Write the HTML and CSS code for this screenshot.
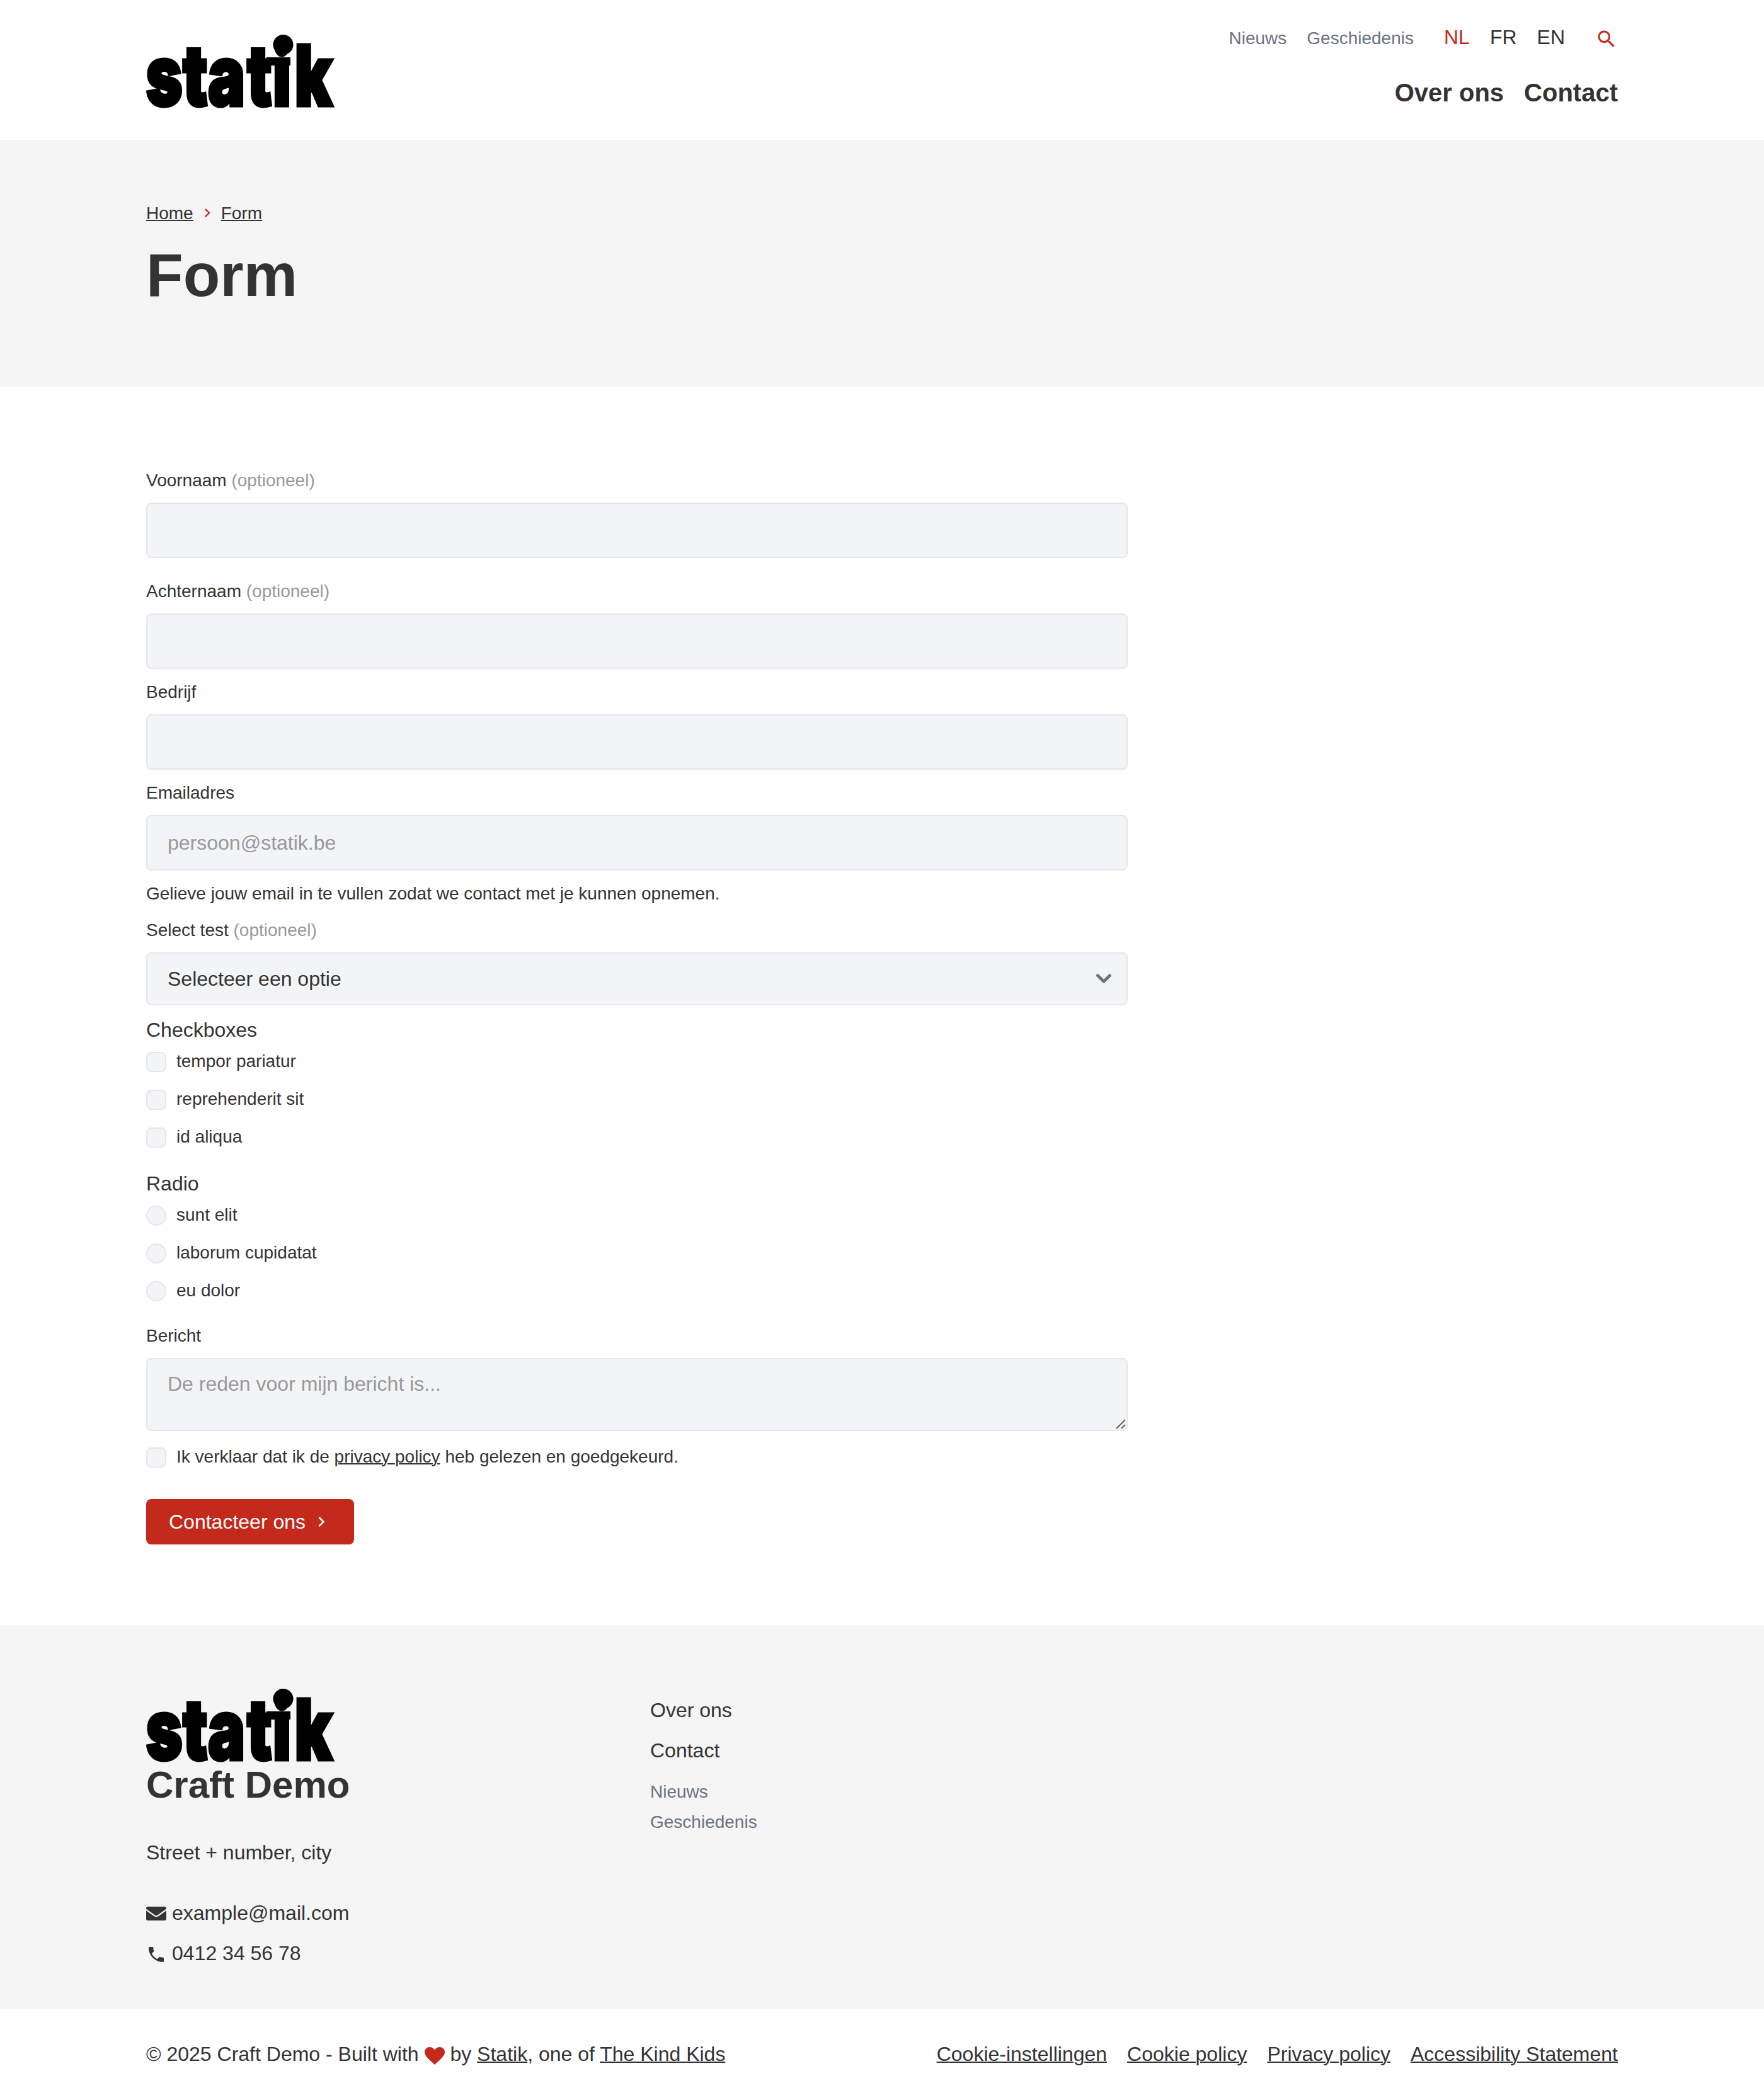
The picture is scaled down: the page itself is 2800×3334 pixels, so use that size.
FILE: index.html
```html
<!DOCTYPE html>
<html lang="nl">
<head>
<meta charset="utf-8">
<title>Form</title>
<link rel="stylesheet" href="styles.css">
</head>
<body>
<svg class="defs" width="0" height="0" aria-hidden="true">
  <symbol id="chevron" viewBox="0 0 24 24"><path d="M8.59 16.59 13.17 12 8.59 7.41 10 6l6 6-6 6z"/></symbol>
</svg>

<header class="header container">
  <a class="logo" href="#">
    <svg class="logo-mark" viewBox="0 0 300 118" role="img" aria-label="statik">
      <text class="logo-text" transform="scale(.74 1)" y="114" x="-2 77 131 215 270 317">statik</text>
      <circle cx="216.500" cy="17" r="16"/>
      <rect x="190" y="37" width="38" height="13"/>
    </svg>
  </a>
  <div class="header-nav">
    <div class="meta-row">
      <nav class="meta-nav"><a href="#">Nieuws</a><a href="#">Geschiedenis</a></nav>
      <nav class="lang-nav"><a class="is-active" href="#">NL</a><a href="#">FR</a><a href="#">EN</a></nav>
      <svg class="search" viewBox="0 0 24 24"><path d="M15.5 14h-.79l-.28-.27A6.471 6.471 0 0 0 16 9.500 6.500 6.500 0 1 0 9.500 16c1.610 0 3.090-.590 4.230-1.570l.270.280v.790l5 4.990L20.490 19l-4.990-5zm-6 0C7.010 14 5 11.990 5 9.500S7.010 5 9.500 5 14 7.010 14 9.500 11.990 14 9.500 14z"/></svg>
    </div>
    <nav class="main-nav"><a href="#">Over ons</a><a href="#">Contact</a></nav>
  </div>
</header>

<section class="hero">
  <div class="container">
    <nav class="breadcrumb"><a href="#">Home</a><svg><use href="#chevron"/></svg><a href="#">Form</a></nav>
    <h1>Form</h1>
  </div>
</section>

<main class="container">
  <form class="form">
    <div class="field field-spaced"><label for="f1">Voornaam <span class="optional">(optioneel)</span></label><input id="f1" class="control" type="text"></div>
    <div class="field"><label for="f2">Achternaam <span class="optional">(optioneel)</span></label><input id="f2" class="control" type="text"></div>
    <div class="field"><label for="f3">Bedrijf</label><input id="f3" class="control" type="text"></div>
    <div class="field"><label for="f4">Emailadres</label><input id="f4" class="control" type="email" placeholder="persoon@statik.be"></div>
    <p class="hint">Gelieve jouw email in te vullen zodat we contact met je kunnen opnemen.</p>
    <div class="field">
      <label for="f5">Select test <span class="optional">(optioneel)</span></label>
      <div class="control-wrap">
        <select id="f5" class="control select"><option>Selecteer een optie</option></select>
        <svg class="select-arrow" viewBox="0 0 24 16"><path d="M2.400 2.800 12 12.200 21.600 2.800"/></svg>
      </div>
    </div>
    <fieldset class="group">
      <legend>Checkboxes</legend>
      <label class="choice"><input type="checkbox"><span>tempor pariatur</span></label>
      <label class="choice"><input type="checkbox"><span>reprehenderit sit</span></label>
      <label class="choice"><input type="checkbox"><span>id aliqua</span></label>
    </fieldset>
    <fieldset class="group">
      <legend>Radio</legend>
      <label class="choice"><input type="radio" name="r"><span>sunt elit</span></label>
      <label class="choice"><input type="radio" name="r"><span>laborum cupidatat</span></label>
      <label class="choice"><input type="radio" name="r"><span>eu dolor</span></label>
    </fieldset>
    <div class="field field-message">
      <label for="f6">Bericht</label>
      <div class="control-wrap">
        <textarea id="f6" class="control textarea" placeholder="De reden voor mijn bericht is..."></textarea>
        <svg class="resize-grip" viewBox="0 0 16 16"><path d="M1 15 15 1M9 15l6-6"/></svg>
      </div>
    </div>
    <label class="choice privacy"><input type="checkbox"><span>Ik verklaar dat ik de <a href="#">privacy policy</a> heb gelezen en goedgekeurd.</span></label>
    <button class="button" type="button">Contacteer ons<svg><use href="#chevron"/></svg></button>
  </form>
</main>

<footer>
  <div class="footer-main">
    <div class="container footer-grid">
      <div>
        <svg class="logo-mark" viewBox="0 0 300 118" role="img" aria-label="statik">
          <text class="logo-text" transform="scale(.74 1)" y="114" x="-2 77 131 215 270 317">statik</text>
          <circle cx="216.500" cy="17" r="16"/>
          <rect x="190" y="37" width="38" height="13"/>
        </svg>
        <h2>Craft Demo</h2>
        <p class="address">Street + number, city</p>
        <a class="contact-line" href="#"><svg viewBox="0 0 32 32"><path d="M3 4h26a3 3 0 0 1 3 3v.500L18.500 17.300q-2.500 1.700-5 0L0 7.500V7a3 3 0 0 1 3-3zM0 10.200l12.600 9.100q3.400 2.200 6.800 0L32 10.200V23a3 3 0 0 1-3 3H3a3 3 0 0 1-3-3z"/></svg>example@mail.com</a>
        <a class="contact-line" href="#"><svg viewBox="0 0 24 24"><path d="M6.620 10.790c1.440 2.830 3.760 5.140 6.590 6.590l2.200-2.200c.270-.270.670-.360 1.020-.240 1.120.370 2.330.570 3.570.570.550 0 1 .450 1 1V20c0 .550-.450 1-1 1-9.390 0-17-7.610-17-17 0-.550.450-1 1-1h3.500c.550 0 1 .450 1 1 0 1.250.200 2.450.570 3.570.110.350.030.740-.250 1.020l-2.200 2.200z"/></svg>0412 34 56 78</a>
      </div>
      <div class="footer-links">
        <nav class="footer-primary"><a href="#">Over ons</a><a href="#">Contact</a></nav>
        <nav class="footer-secondary"><a href="#">Nieuws</a><a href="#">Geschiedenis</a></nav>
      </div>
    </div>
  </div>
  <div class="footer-bottom container">
    <p>© 2025 Craft Demo - Built with <svg class="heart" viewBox="0 0 32 28"><path d="M16 28C13 25 8 21 4.500 17 1.500 13.600 0 11 0 8 0 3.300 3.600 0 8 0c3.200 0 6.300 1.600 8 4.600C17.700 1.600 20.800 0 24 0c4.400 0 8 3.300 8 8 0 3-1.500 5.600-4.500 9C24 21 19 25 16 28z"/></svg> by <a href="#">Statik</a>, one of <a href="#">The Kind Kids</a></p>
    <nav class="legal"><a href="#">Cookie-instellingen</a><a href="#">Cookie policy</a><a href="#">Privacy policy</a><a href="#">Accessibility Statement</a></nav>
  </div>
</footer>
</body>
</html>
```
FILE: styles.css
```css
* { box-sizing: border-box; }
body {
  margin: 0;
  background: #fff;
  color: #333;
  font: 32px/48px "Liberation Sans", Arial, sans-serif;
}
a { color: inherit; text-decoration: none; }
h1, h2, p { margin: 0; }
svg { fill: currentColor; flex: none; }
.defs { display: block; }
.container { width: 2336px; margin: 0 auto; }

.header { display: flex; justify-content: space-between; height: 222px; }
.logo { padding-top: 54px; }
.logo-mark { display: block; width: 302px; height: 118px; color: #000; overflow: visible; }
.logo-text { font: 900 134px/1 Inter, sans-serif; stroke: #000; stroke-width: 5px; }
.header-nav { display: flex; flex-direction: column; align-items: flex-end; padding-top: 35px; }
.meta-row { display: flex; align-items: flex-start; gap: 48px; }
.meta-nav, .lang-nav, .main-nav, .legal { display: flex; gap: 32px; }
.meta-nav { color: #6b7280; font-size: 28px; padding-top: 2px; }
.lang-nav .is-active { color: #c42a1c; }
.search { width: 36px; height: 36px; color: #c42a1c; margin-top: 9px; }
.main-nav { font-size: 40px; font-weight: 700; line-height: 60px; margin-top: 32px; }

.hero { background: #f5f5f5; height: 392px; padding-top: 97px; }
.breadcrumb { display: flex; align-items: center; gap: 8px; font-size: 28px; line-height: 40px; }
.breadcrumb a, .choice a, .footer-bottom a { text-decoration: underline; text-decoration-thickness: 2px; }
.breadcrumb svg { width: 28px; height: 28px; color: #c42a1c; margin-top: -2px; }
h1 { font-size: 96px; line-height: 120px; margin-top: 18px; }

.form { display: flex; flex-direction: column; width: 1558px; padding: 129px 0 128px; }
.field { display: flex; flex-direction: column; gap: 15px; margin-bottom: 17px; font-size: 28px; line-height: 40px; }
.field-spaced { margin-bottom: 33px; }
.optional { color: #999; }
.control {
  display: block;
  width: 100%;
  height: 88px;
  margin: 0;
  padding: 0 32px;
  border: 2px solid #e5e7eb;
  border-radius: 8px;
  background: #f3f4f6;
  color: #333;
  font: 32px/48px "Liberation Sans", Arial, sans-serif;
  appearance: none;
}
.control::placeholder { color: #999; opacity: 1; }
.control-wrap { position: relative; }
.select { height: 84px; padding-bottom: 1px; }
.select-arrow {
  position: absolute; right: 26px; top: 34px; width: 24px; height: 16px;
  fill: none; stroke: #6b7280; stroke-width: 4.800px; stroke-linecap: round; stroke-linejoin: round;
}
.textarea { height: 116px; padding-top: 15px; resize: none; }
.resize-grip { position: absolute; right: 3px; bottom: 3px; width: 16px; height: 16px; stroke: #555; stroke-width: 1.800px; }
.hint { font-size: 28px; line-height: 40px; margin-bottom: 18px; }
.group { border: 0; margin: -2px 0 32px; padding: 0; }
.group legend { padding: 0; margin-bottom: 6px; }
.choice { display: flex; gap: 16px; font-size: 28px; line-height: 40px; }
.group .choice + .choice { margin-top: 20px; }
.choice input {
  appearance: none; flex: none; width: 32px; height: 32px; margin: 5px 0 0;
  border: 2px solid #e5e7eb; border-radius: 8px; background: #f3f4f6;
}
.choice input[type="radio"] { border-radius: 50%; }
.field-message { margin-bottom: 21px; }
.privacy { margin-bottom: 47px; }
.button {
  display: flex; align-items: center; gap: 9px; align-self: flex-start;
  width: 330px; height: 72px; padding: 0 0 1px 36px; border: 0; border-radius: 8px;
  background: #c42a1c; color: #fff; font: 32px/48px "Liberation Sans", Arial, sans-serif;
}
.button svg { width: 32px; height: 32px; }

.footer-main { background: #f5f5f5; height: 610px; padding-top: 100px; }
.footer-grid { display: grid; grid-template-columns: 800px 1fr; }
h2 { font-size: 60px; line-height: 72px; }
.address { margin-top: 47px; }
.contact-line { display: flex; align-items: center; gap: 9px; margin-top: 16px; }
.contact-line svg { width: 32px; height: 32px; margin-top: 4px; }
.address + .contact-line { margin-top: 48px; }
.footer-links { padding-top: 11px; }
.footer-primary, .footer-secondary { display: flex; flex-direction: column; }
.footer-primary { gap: 16px; }
.footer-secondary { color: #6b7280; font-size: 28px; margin-top: 18px; }
.footer-bottom { display: flex; justify-content: space-between; padding: 47px 0 49px; }
.heart { width: 32px; height: 28px; color: #c42a1c; vertical-align: -6px; }
```
